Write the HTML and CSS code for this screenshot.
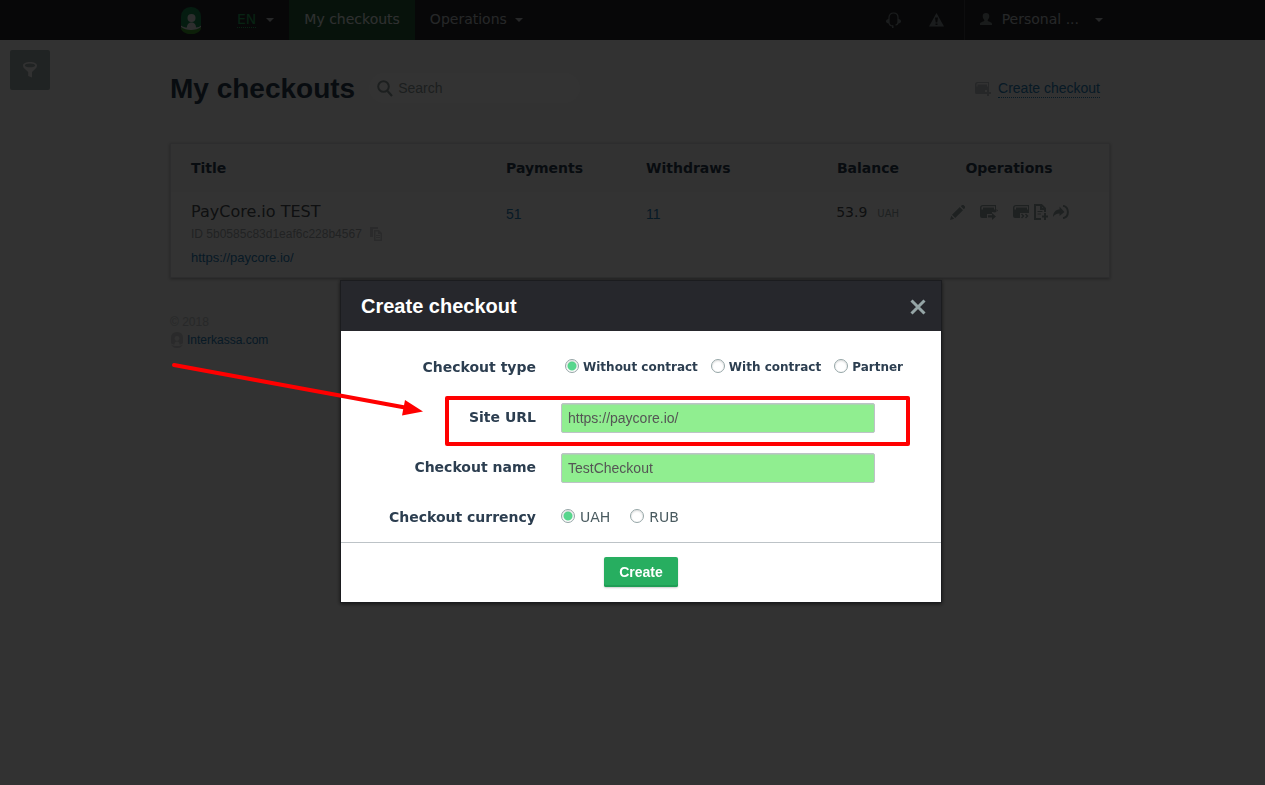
FILE: index.html
```html
<!DOCTYPE html>
<html lang="en">
<head>
<meta charset="utf-8">
<title>My checkouts</title>
<link rel="stylesheet" href="styles.css">
</head>
<body>
<header class="topbar">
  <div class="container topbar-inner">
    <a class="logo" href="#" aria-label="Home">
      <svg width="20" height="27" viewBox="0 0 20 27"><rect width="20" height="27" rx="9.5" fill="#1a8a52"/><path d="M0 20C5 23.500 15 23.500 20 20V22C17 29 3 29 0 22Z" fill="#3c9b2c"/><circle cx="10.500" cy="11" r="4" fill="#e6e6e6"/><path d="M0 18.500C2 20 4 20.500 6 20.500C6 17 8 15.500 10.500 15.500S15 17 15 20.500C17 20.500 19 19.500 20 18.500V20C15 24 5 24 0 20Z" fill="#e6e6e6"/></svg>
    </a>
    <button class="nav-item lang" type="button"><span class="lang-name">EN</span><span class="caret"></span></button>
    <a class="nav-item active" href="#">My checkouts</a>
    <button class="nav-item" type="button">Operations<span class="caret"></span></button>
    <div class="tools">
      <a href="#" aria-label="Support"><svg width="15" height="16" viewBox="0 0 15 16"><path d="M3 11V5.500C3 2.500 5 1 7.500 1S12 2.500 12 5.500V10C12 12 10.500 13 9.500 13M3 10C3 13 4.500 14 7 14" fill="none" stroke="#848e93" stroke-width="1.200"/><path d="M3 7C1 7.300 0 8 0 9.200S1 11 3 11.500ZM12 7C14 7.300 15 8 15 9.200S14 11 12 11.500Z" fill="#848e93"/><path d="M6 13.500h1.500V16H6z" fill="#848e93"/></svg></a>
      <a href="#" aria-label="Alerts"><svg width="15" height="14" viewBox="0 0 15 14"><path fill-rule="evenodd" d="M7.500 0L15 13.500H0ZM6 4.500L6.700 9.500H8.300L9 4.500ZM6.500 10.500V12H8.500V10.500Z" fill="#848e93"/></svg></a>
    </div>
    <button class="nav-item account" type="button">
      <svg width="12" height="12" viewBox="0 0 12 12"><path d="M6 0C8 0 9.300 1 9.300 3C9.300 5.200 8.300 6 7.700 7V8C9 9 12 9 12 11V12H0V11C0 9 3 9 4.300 8V7C3.700 6 2.700 5.200 2.700 3C2.700 1 4 0 6 0Z" fill="#7f8888"/></svg>
      <span>Personal ...</span><span class="caret"></span>
    </button>
  </div>
</header>

<button class="filter" type="button" aria-label="Filter">
  <svg width="14" height="16" viewBox="0 0 14 16"><path fill-rule="evenodd" d="M7 0C11 0 14 1.500 14 3.500C14 6 12 7 9 10V15.500L5.200 14V10C2 7 0 6 0 3.500C0 1.500 3 0 7 0ZM7 1.500C4 1.500 1.800 2.300 1.800 3.400S4 5.300 7 5.300S12.200 4.500 12.200 3.400S10 1.500 7 1.500Z" fill="#f4f4f4"/></svg>
</button>

<main>
  <div class="container">
    <div class="page-head">
      <h1>My checkouts</h1>
      <label class="search">
        <svg width="16" height="17" viewBox="0 0 16 17"><circle cx="6.500" cy="6.500" r="5.300" fill="none" stroke="#8c9999" stroke-width="2"/><path d="M10.500 11L15 16" stroke="#8c9999" stroke-width="2.200"/></svg>
        <input type="text" placeholder="Search" aria-label="Search">
      </label>
      <a class="create" href="#">
        <svg width="16" height="14" viewBox="0 0 16 14"><path fill-rule="evenodd" d="M2.500 0H14V8H10V12H1.500Q0 12 0 10.500V2.500Q0 0 2.500 0ZM1.500 4.500H2.500V2.500H12V4.500H13V1H3Q1.500 1 1.500 2.500Z" fill="#bdc3c7"/><path d="M12 8h2v2h2v2h-2v2h-2v-2h-2v-2h2z" fill="#bdc3c7"/></svg>
        <span>Create checkout</span>
      </a>
    </div>

    <table class="list">
      <thead>
        <tr><th class="c-title">Title</th><th class="c-num">Payments</th><th class="c-num">Withdraws</th><th class="c-balance">Balance</th><th class="c-ops">Operations</th></tr>
      </thead>
      <tbody>
        <tr>
          <td class="c-title">
            <div class="name">PayCore.io TEST</div>
            <div class="ident"><span>ID 5b0585c83d1eaf6c228b4567</span><svg width="12" height="14" viewBox="0 0 12 14"><path d="M0 0H8V2H3V10H0Z" fill="#d0d3d5"/><path fill-rule="evenodd" d="M4 3H9L12 6V14H4ZM5.500 4.500V12.500H10.500V7H8V4.500ZM6 8H10V9H6ZM6 10H10V11H6Z" fill="#d0d3d5"/></svg></div>
            <a class="site" href="#">https://paycore.io/</a>
          </td>
          <td class="c-num"><a href="#">51</a></td>
          <td class="c-num"><a href="#">11</a></td>
          <td class="c-balance">53.9<span class="cur">UAH</span></td>
          <td class="c-ops">
            <div class="ops">
              <a class="spaced" href="#" aria-label="Edit"><svg width="15" height="15" viewBox="0 0 15 15"><path d="M0 15L1.200 10.800L4.200 13.800ZM2 9.800L9.800 2L13 5.200L5.200 13ZM10.800 1.200L12 0H13.500L15 1.500V3L13.800 4.200Z" fill="#95a5a6"/></svg></a>
              <a class="spaced" href="#" aria-label="Top up"><svg width="18" height="15" viewBox="0 0 18 15"><path fill-rule="evenodd" d="M3 0H16V7L15 7.500L12 7V9H7V13H2Q0 13 0 11V3Q0 0 3 0ZM1.500 4.500H3V2.500H14V4.500H15V1.200H3Q1.500 1.200 1.500 2.500Z" fill="#95a5a6"/><path d="M8 10.200H12V8L16 11.500L12 15V12.500H8ZM16.500 4L18 5.500L16.500 7Z" fill="#95a5a6"/></svg></a>
              <a href="#" aria-label="Withdraw"><svg width="16" height="15" viewBox="0 0 16 15"><path fill-rule="evenodd" d="M3 0H16V8H7V13H2Q0 13 0 11V3Q0 0 3 0ZM1.500 4.500H3V2.500H14V4.500H15V1.200H3Q1.500 1.200 1.500 2.500Z" fill="#95a5a6"/><path d="M8.500 9L10.500 11L8.500 13M12.500 9L14.500 11L12.500 13" stroke="#95a5a6" stroke-width="1.500" fill="none"/></svg></a>
              <a href="#" aria-label="New invoice"><svg width="14" height="16" viewBox="0 0 14 16"><path d="M7 15H1V1H7.500L11 4.500V8M7 1V5H11" stroke="#95a5a6" stroke-width="2" fill="none"/><path d="M3.500 7.500H8.500M3.500 10H7" stroke="#95a5a6" fill="none"/><path d="M10 9h2v2.500h2v2h-2V16h-2v-2.500H8v-2h2z" fill="#95a5a6"/></svg></a>
              <a href="#" aria-label="Share"><svg width="16" height="14" viewBox="0 0 16 14"><path d="M0 12C0 7 3 4.500 6.500 4.500V1.500L11.500 7L6.500 11V8.500C3.500 8.500 1.500 10 0 12Z" fill="#95a5a6"/><path d="M10 .8C16.500 2 16.500 12 10 13.200" stroke="#95a5a6" stroke-width="2" fill="none"/></svg></a>
            </div>
          </td>
        </tr>
      </tbody>
    </table>

    <footer class="foot">
      <div class="copy">© 2018</div>
      <a href="#"><svg width="12" height="16" viewBox="0 0 12 16"><rect width="12" height="16" rx="5.500" fill="#d0d3d5"/><circle cx="6" cy="6.500" r="2.400" fill="#f7f7f7"/><path d="M0 11.500C1 12 2.500 12.500 3.500 12.500C3.500 10.500 4.500 9.500 6 9.500S8.500 10.500 8.500 12.500C9.500 12.500 11 12 12 11.500V12.500C9 14.500 3 14.500 0 12.500Z" fill="#f7f7f7"/></svg><span>Interkassa.com</span></a>
    </footer>
  </div>
</main>

<div class="backdrop">
  <form class="modal" role="dialog" aria-labelledby="dialog-title">
    <div class="modal-head">
      <h2 id="dialog-title">Create checkout</h2>
      <button class="close" type="button" aria-label="Close"><svg width="16" height="16" viewBox="0 0 16 16"><path d="M1.500 1.500L14.500 14.500M14.500 1.500L1.500 14.500" stroke="#95a5a6" stroke-width="3"/></svg></button>
    </div>
    <div class="modal-body">
      <div class="row" role="radiogroup" aria-labelledby="type-label">
        <span class="label" id="type-label">Checkout type</span>
        <div class="choices types">
          <label><input type="radio" name="type" checked>Without contract</label>
          <label><input type="radio" name="type">With contract</label>
          <label><input type="radio" name="type">Partner</label>
        </div>
      </div>
      <div class="row">
        <label class="label" for="site">Site URL</label>
        <input class="field" id="site" type="text" value="https://paycore.io/">
        <span class="highlight"></span>
        <svg class="arrow" width="252" height="54" viewBox="0 0 252 54"><path d="M3 4L234 46.500" stroke="#f00" stroke-width="4" stroke-linecap="round"/><path d="M234 39L252 50.500L231 54.500Z" fill="#f00"/></svg>
      </div>
      <div class="row">
        <label class="label" for="name">Checkout name</label>
        <input class="field" id="name" type="text" value="TestCheckout">
      </div>
      <div class="row" role="radiogroup" aria-labelledby="currency-label">
        <span class="label" id="currency-label">Checkout currency</span>
        <div class="choices currencies">
          <label><input type="radio" name="currency" checked>UAH</label>
          <label><input type="radio" name="currency">RUB</label>
        </div>
      </div>
    </div>
    <div class="modal-foot"><button class="submit" type="submit">Create</button></div>
  </form>
</div>
</body>
</html>
```
FILE: styles.css
```css
* { box-sizing: border-box; }

body {
  margin: 0;
  min-height: 100vh;
  background: #f7f7f7;
  color: #4a4f54;
  font: 14px/20px "Liberation Sans", Arial, sans-serif;
}

a { color: #2980b9; text-decoration: none; }
svg { display: block; flex: none; }
button { border: 0; font: inherit; cursor: pointer; }

.container { max-width: 940px; margin: 0 auto; }
.topbar, main { padding-left: 15px; }
.topbar { background: #262628; }

.topbar-inner { display: flex; height: 40px; }
.logo { display: flex; align-items: center; justify-content: center; width: 42px; margin-right: 10px; }
.nav-item {
  display: flex;
  align-items: center;
  gap: 8px;
  padding: 0 15px 2px;
  background: none;
  color: #bdc3c7;
  font: 14px/18px "DejaVu Sans", sans-serif;
  white-space: nowrap;
}
.lang { gap: 10px; }
.lang-name { color: #27ae60; border-bottom: 1px dotted #27ae60; line-height: 16px; }
.active { background: #235c37; color: #e8ecee; }
.caret { margin-top: 2px; border: 4px solid transparent; border-top-color: #bdc3c7; border-bottom: 0; }
.tools { display: flex; align-items: center; gap: 28px; margin-left: auto; padding-right: 20px; }
.account { gap: 10px; border-left: 1px solid #444449; padding-right: 7px; }
.account .caret { margin-left: 6px; }

.filter {
  position: absolute;
  top: 50px;
  left: 10px;
  display: flex;
  align-items: center;
  justify-content: center;
  width: 40px;
  height: 40px;
  padding: 0;
  border-radius: 2px;
  background: #a0adad;
}

.page-head { display: flex; align-items: center; height: 103px; padding: 33px 0 40px; }
h1 { margin: 0; padding-top: 2px; color: #2c3e50; font-size: 28px; line-height: 32px; }
.search {
  display: flex;
  align-items: center;
  gap: 5px;
  width: 211px;
  height: 30px;
  margin-left: 14px;
  padding: 0 8px;
  border-radius: 15px;
  background: #fff;
}
.search input { flex: 1; min-width: 0; padding: 0; border: 0; outline: 0; background: none; font: inherit; }
.search input::placeholder { color: #8c9999; opacity: 1; }
.create { display: flex; align-items: center; gap: 7px; margin-left: auto; padding: 1px 10px 0 0; }
.create span { line-height: 17px; border-bottom: 1px dotted #2980b9; }

.list {
  width: 100%;
  table-layout: fixed;
  border-collapse: separate;
  border-spacing: 0;
  border: 1px solid #e0e2e3;
  background: #fff;
  box-shadow: 0 1px 3px rgba(0, 0, 0, .3);
}
.list th, .list td { padding: 0 10px; text-align: left; }
.list th {
  height: 48px;
  background: #f9f9f9;
  color: #2c3e50;
  font: bold 14px/18px "DejaVu Sans", sans-serif;
}
.list td { height: 85px; padding-top: 10px; vertical-align: top; }
.list .c-title { width: 325px; padding-left: 20px; }
.list .c-num { width: 140px; }
.list td.c-num { padding-top: 12px; }
.list .c-balance { width: 133px; text-align: right; }
.list td.c-balance { font-family: "DejaVu Sans", sans-serif; }
.list .c-ops { width: 200px; text-align: center; }
.cur { margin-left: 10px; color: #95a5a6; font-size: 10px; }
.name { font: 16px/20px "DejaVu Sans", sans-serif; }
.ident { display: flex; align-items: center; gap: 8px; height: 24px; color: #a4acae; font-size: 12px; }
.site { display: block; font-size: 13px; line-height: 24px; }
.ops { display: flex; align-items: center; justify-content: center; gap: 5px; height: 20px; }
.spaced { margin-right: 10px; }

.foot { padding-top: 35px; font-size: 12px; line-height: 18px; }
.copy { color: #c2c8ca; }
.foot a { display: flex; align-items: center; gap: 4px; padding-left: 1px; }

.backdrop {
  position: fixed;
  inset: 0;
  padding: 280px 0 0 17px;
  background: rgba(0, 0, 0, .8);
  overflow: hidden;
}
.modal {
  max-width: 602px;
  margin: 0 auto;
  border: 1px solid #1b1c1f;
  background: #fff;
  background-clip: padding-box;
  box-shadow: 0 1px 4px rgba(0, 0, 0, .6);
}
.modal-head {
  display: flex;
  align-items: center;
  justify-content: space-between;
  height: 50px;
  padding: 0 15px 0 20px;
  background: #26272c;
}
h2 { margin: 0; color: #fff; font-size: 20px; line-height: 24px; }
.close { padding: 2px 0 0; background: none; }
.modal-body { padding-top: 11px; color: #4a5b60; font-family: "DejaVu Sans", sans-serif; }
.row { position: relative; display: flex; align-items: center; height: 50px; }
.label { width: 195px; margin-right: 25px; text-align: right; color: #2c3e50; font-weight: bold; }
.field {
  width: 314px;
  height: 30px;
  margin: 2px 0 0;
  padding: 0 6px;
  border: 1px solid #bdc3c7;
  border-radius: 2px;
  box-shadow: inset 0 1px 1px rgba(189, 195, 199, .6);
  outline: 0;
  background: #90ee90;
  color: #555;
  font: 14px/20px "Liberation Sans", Arial, sans-serif;
}
.choices { display: flex; }
.choices label { display: flex; align-items: center; }
.currencies { gap: 20px; }
.currencies label { gap: 5px; }
.types { gap: 13px; padding-left: 4px; color: #2c3e50; font-size: 12px; font-weight: bold; white-space: nowrap; }
.types label { gap: 4px; }
input[type="radio"] {
  appearance: none;
  width: 14px;
  height: 14px;
  margin: 0 0 2px;
  border: 1px solid #95a5a6;
  border-radius: 50%;
  background: #fff;
  box-shadow: inset 0 1px 2px rgba(0, 0, 0, .15);
}
input[type="radio"]:checked { background: radial-gradient(circle, #58d68d 4px, #fff 5px); }
.modal-foot { display: flex; justify-content: center; padding: 14px 0 15px; border-top: 1px solid #bdc3c7; }
.submit {
  height: 30px;
  padding: 0 15px;
  border-radius: 2px;
  background: #27ae60;
  box-shadow: inset 0 -2px #1f9d55, 0 1px 2px rgba(0, 0, 0, .2);
  color: #fff;
  font-weight: bold;
}
.highlight {
  position: absolute;
  top: 4px;
  left: 104px;
  width: 465px;
  height: 50px;
  border: 4px solid #f00;
  border-radius: 2px;
  pointer-events: none;
}
.arrow { position: absolute; top: -31px; left: -170px; overflow: visible; pointer-events: none; }
```
